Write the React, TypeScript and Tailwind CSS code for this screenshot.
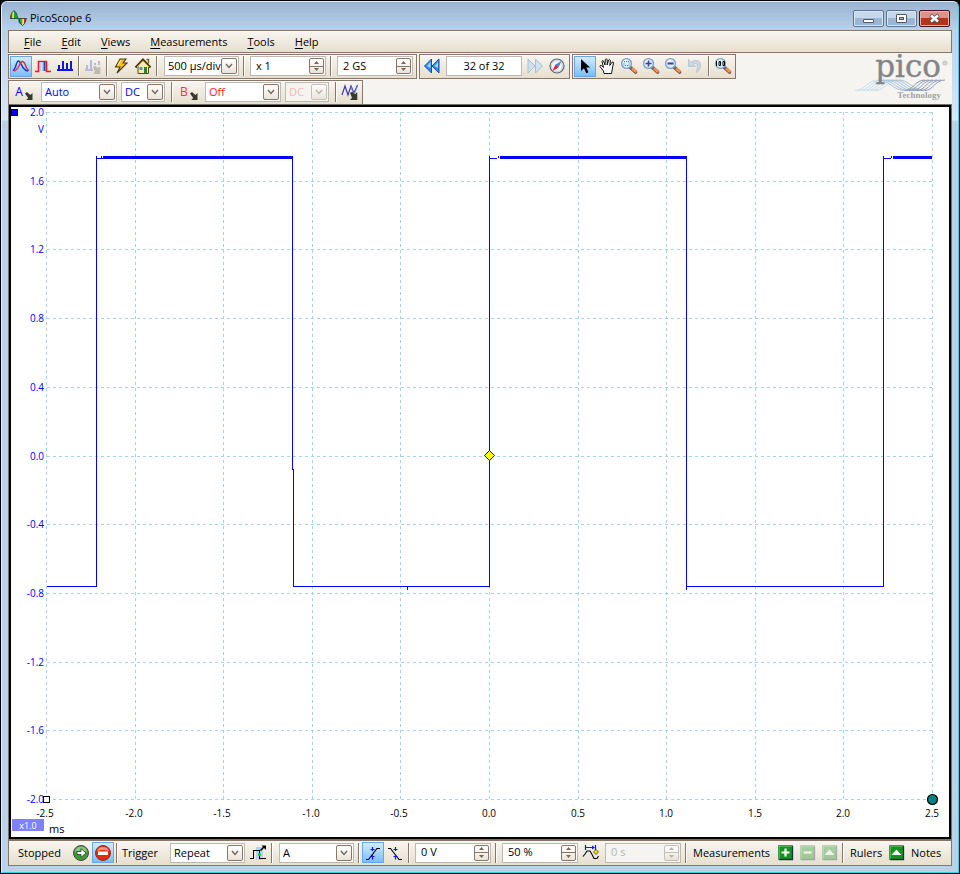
import React from "react";

const FONT = "font-['Open_Sans','Noto_Sans',sans-serif]";

/* ---------- generic controls ---------- */

function Sep() {
  return (
    <span className="flex h-5 w-1.5 shrink-0 pl-0.5" aria-hidden="true">
      <span className="w-px bg-[#8b7565]" />
      <span className="w-px bg-white" />
    </span>
  );
}

function Tool({
  label,
  pressed = false,
  disabled = false,
  children,
}: {
  label: string;
  pressed?: boolean;
  disabled?: boolean;
  children: React.ReactNode;
}) {
  return (
    <button
      type="button"
      aria-label={label}
      title={label}
      disabled={disabled}
      className={
        "flex h-[21px] w-[22px] shrink-0 items-center justify-center border " +
        (pressed
          ? "border-[#66a7e8] bg-linear-to-b from-[#d6ebfd] to-[#74bffb]"
          : "border-transparent")
      }
    >
      <svg width="18" height="18" viewBox="-1 -1 18 18" className="shrink-0">
        {children}
      </svg>
    </button>
  );
}

function Drop({
  label,
  value,
  width,
  tone = "text-black",
  disabled = false,
}: {
  label: string;
  value: string;
  width: string;
  tone?: string;
  disabled?: boolean;
}) {
  return (
    <div className={"relative h-5 shrink-0 " + width}>
      <select
        aria-label={label}
        defaultValue={value}
        disabled={disabled}
        className={
          "block h-5 w-full appearance-none border border-[#bdb9b3] pl-[3px] text-[11px] leading-4 " +
          (disabled ? "bg-[#f6f4f1] " : "bg-white ") +
          tone
        }
      >
        <option>{value}</option>
      </select>
      <span
        className={
          "pointer-events-none absolute top-0.5 right-0.5 flex h-4 w-4 items-center justify-center rounded-xs border bg-linear-to-b from-white to-[#e9e4da] " +
          (disabled ? "border-[#c5c0ba]" : "border-[#8b7565]")
        }
      >
        <svg width="8" height="6" viewBox="0 0 8 6" fill="none" stroke={disabled ? "#b7b2ac" : "#7a6658"} strokeWidth="1.4">
          <path d="M1 1l3 3.5L7 1" />
        </svg>
      </span>
    </div>
  );
}

function Spin({ label, value, disabled = false }: { label: string; value: string; disabled?: boolean }) {
  const edge = disabled ? "border-[#c5c0ba]" : "border-[#8b7565]";
  const ink = disabled ? "#b7b2ac" : "#7a6658";
  return (
    <div
      className={
        "flex h-5 w-[76px] shrink-0 items-center border border-[#bdb9b3] pr-px " +
        (disabled ? "bg-[#f6f4f1]" : "bg-white")
      }
    >
      <input
        aria-label={label}
        defaultValue={value}
        disabled={disabled}
        className={
          "h-full w-0 flex-1 bg-transparent pb-0.5 pl-[5px] text-[11px] outline-none " +
          (disabled ? "text-[#b5b5b5]" : "text-black")
        }
      />
      <div className={"flex h-4 w-[15px] flex-col overflow-hidden rounded-xs border bg-linear-to-b from-white to-[#e9e4da] " + edge}>
        <button type="button" disabled={disabled} aria-label={label + " up"} className={"flex flex-1 items-center justify-center border-b " + edge}>
          <svg width="5" height="3" viewBox="0 0 5 3">
            <path d="M0 3L2.5 0 5 3z" fill={ink} />
          </svg>
        </button>
        <button type="button" disabled={disabled} aria-label={label + " down"} className="flex flex-1 items-center justify-center">
          <svg width="5" height="3" viewBox="0 0 5 3">
            <path d="M0 0L2.5 3 5 0z" fill={ink} />
          </svg>
        </button>
      </div>
    </div>
  );
}

/* ---------- icons ---------- */

function Lens({ children }: { children?: React.ReactNode }) {
  return (
    <>
      <path d="M9.5 9.5l5 4.5" stroke="#7a4a3c" strokeWidth="3.6" strokeLinecap="round" />
      <path d="M10 9.5l4.5 4" stroke="#f79646" strokeWidth="2.4" strokeLinecap="round" />
      <path d="M9.4 9.4l1.5 1.3" stroke="#5a6690" strokeWidth="2.6" />
      <circle cx="5.5" cy="5.5" r="4.900" fill="#d3f1fb" stroke="#7c9cc4" strokeWidth="1.300" />
      <path d="M2.500 5a3.300 3.300 0 0 1 3-2.800" stroke="#fff" strokeWidth="1.400" fill="none" />
      {children}
    </>
  );
}

function SmallArrow({ fill = "#38382f" }: { fill?: string }) {
  return <path d="M8 9l2-1.200 3 2.400 2.300-2V16H8l2-2.200z" fill={fill} />;
}

function ChannelButton({ name, tone, width }: { name: string; tone: string; width: string }) {
  return (
    <button type="button" aria-label={"Channel " + name} className={"flex h-5 shrink-0 items-center pl-1 text-[12px] " + tone + " " + width}>
      <span className="w-2.5 leading-4">{name}</span>
      <svg width="10" height="10" viewBox="0 0 10 10" className="mt-2">
        <path d="M1 2.500L3 1l3.300 3L8.500 2v7H2.200l2-2z" fill="#38382f" />
      </svg>
    </button>
  );
}

function Logo() {
  const strands = [0, 1, 2, 3, 4, 5];
  return (
    <svg width="95" height="46" viewBox="0 0 95 46" className="shrink-0 overflow-visible" role="img" aria-label="pico Technology">
      <g fill="none" strokeWidth="0.900">
        {strands.map((i) => (
          <path key={"a" + i} d={`M${-2 + i * 4} 36.500c10 0 12 -10.500 24 -10.500`} stroke="#bfdcf0" />
        ))}
        {strands.map((i) => (
          <path key={"b" + i} d={`M${22 + i * 4} 26c10 0 14 10.500 26 10.500`} stroke="#9dbbd6" />
        ))}
        {strands.map((i) => (
          <path key={"c" + i} d={`M${48 + i * 4} 36.500c8 0 10 -10.500 20 -10.500`} stroke="#7f8bad" />
        ))}
      </g>
      <text x="84" y="23" textAnchor="end" fontSize="31" fill="#858585" stroke="#858585" strokeWidth="0.400" className="font-['DejaVu_Serif',serif]">
        pico
      </text>
      <circle cx="88" cy="9" r="2" fill="none" stroke="#a0a0a0" strokeWidth="0.700" />
      <path d="M87.400 10V8h1l.3.600-.600.500.600.900" fill="none" stroke="#a0a0a0" strokeWidth="0.400" />
      <text x="84" y="44" textAnchor="end" fontSize="9" fontWeight="700" fill="#a3a3a3" className="font-['Liberation_Serif',serif]">
        Technology
      </text>
    </svg>
  );
}

/* ---------- window furniture ---------- */

function TitleBar() {
  const plain =
    "border-[#5f7390] bg-linear-to-b from-[#c6d8ec] from-50% to-[#9bb6d4] to-50%";
  return (
    <header className="flex h-7 items-center pl-0.5 pr-0.5">
      <svg width="17" height="17" viewBox="0 0 17 17" className="mt-1">
        <path d="M0.500 8.500V6L2.500 2v6.500z" fill="#d9321e" />
        <path d="M2.300 8.500V2.500L4 1v7.500z" fill="#f5e63b" />
        <path d="M4 8.500V1l2 1.500 1.500 6z" fill="#16a02c" />
        <path d="M0 8.500Q4-7 8 8.500z" fill="none" stroke="#2b3a2b" strokeWidth="0.800" />
        <path d="M8.500 8.500H10V14L8.500 12z" fill="#1c5fd0" />
        <path d="M10 8.500h2.500V15L10 14z" fill="#2fae3a" />
        <path d="M12.300 8.500H14V14l-1.700 1.500z" fill="#f5e63b" />
        <path d="M14 8.500h2V11l-2 3z" fill="#d9321e" />
        <path d="M8.500 8.500q4 14 8 0z" fill="none" stroke="#2b3a2b" strokeWidth="0.800" />
      </svg>
      <h1 className="ml-[3px] flex-1 pt-1 text-[11px] leading-4">PicoScope 6</h1>
      <div className="mt-1 flex gap-0.5">
        <button type="button" aria-label="Minimize" className={"flex h-[17px] w-[31px] items-center justify-center rounded-xs border shadow-[inset_0_0_0_1px_#dbe7f4] " + plain}>
          <svg width="13" height="11" viewBox="0 0 13 11">
            <rect x="1.500" y="6.500" width="10" height="3" rx="0.500" fill="#fff" stroke="#535666" />
          </svg>
        </button>
        <button type="button" aria-label="Maximize" className={"flex h-[17px] w-[31px] items-center justify-center rounded-xs border shadow-[inset_0_0_0_1px_#dbe7f4] " + plain}>
          <svg width="13" height="11" viewBox="0 0 13 11">
            <rect x="1.500" y="1.500" width="10" height="8" rx="0.500" fill="#fff" stroke="#535666" />
            <rect x="4.500" y="4.500" width="4" height="2" fill="#9bb6d4" stroke="#535666" />
          </svg>
        </button>
        <button type="button" aria-label="Close" className="flex h-[17px] w-[31px] items-center justify-center rounded-xs border border-[#4a1226] bg-linear-to-b from-[#dd9486] from-45% to-[#b9301b] to-50% shadow-[inset_0_0_0_1px_#e9b2a8]">
          <svg width="13" height="11" viewBox="0 0 13 11">
            <path d="M2.500 2l8 7M10.500 2l-8 7" stroke="#535666" strokeWidth="4" />
            <path d="M3 2.500l7 6M10 2.500l-7 6" stroke="#fff" strokeWidth="2.400" />
          </svg>
        </button>
      </div>
    </header>
  );
}

function MenuBar() {
  const items = ["File", "Edit", "Views", "Measurements", "Tools", "Help"];
  return (
    <nav className="flex h-[23px] items-center gap-5 border border-[#8b7565] bg-linear-to-b from-[#f8f6f1] to-[#e7dfce] pl-[15px] shadow-[inset_0_1px_0_#fff]">
      {items.map((m) => (
        <button key={m} type="button" className="text-[11px] leading-4">
          <span className="underline underline-offset-2">{m[0]}</span>
          {m.slice(1)}
        </button>
      ))}
    </nav>
  );
}

const STRIP =
  "flex h-[25px] items-center border border-[#8b7565] bg-linear-to-b from-[#f8f6f1] to-[#e7dfce] px-px pb-px shadow-[inset_0_1px_0_#fff]";

function Toolbars() {
  return (
    <div className="flex items-start justify-between bg-[#f5f4f1] pt-px">
      <div className="flex flex-col gap-px">
        <div className="flex gap-0.5">
          <div className={STRIP}>
            <Tool label="Scope mode" pressed>
              <path d="M0 12.500C3 11.500 3 3 5.500 3S9 12.500 15 13" fill="none" stroke="#1f2be0" strokeWidth="1.400" />
              <path d="M1 13C6 12 6.500 3.500 9.500 3.500S13 12 16 12.500" fill="none" stroke="#e02a3a" strokeWidth="1.400" />
            </Tool>
            <Tool label="Persistence mode">
              <rect x="5" y="3" width="6" height="10" fill="#9cb9e8" />
              <path d="M0 13.500h3.500V3.500h8v10H16" fill="none" stroke="#f01822" strokeWidth="1.600" />
              <path d="M6.500 4v9" stroke="#cfe0f7" strokeWidth="2" />
              <path d="M9.500 4v9" stroke="#1c55b8" strokeWidth="1.600" />
            </Tool>
            <Tool label="Spectrum mode">
              <path d="M0 12h16M2 12V7M6 12V3M10 12V5M14 12V3" stroke="#1018e0" strokeWidth="2" fill="none" shapeRendering="crispEdges" />
            </Tool>
            <Sep />
            <Tool label="Spectrum options" disabled>
              <path d="M0 12h8M2 12V7M6 12V2M10 7V5M14 7V3" stroke="#b5b9dc" strokeWidth="2" fill="none" shapeRendering="crispEdges" />
              <SmallArrow fill="#bdbab4" />
            </Tool>
            <Sep />
            <Tool label="Auto setup">
              <path d="M7 1h6l-3 4h4L4 15l3-6H2.500z" fill="#f8c21c" stroke="#4d3a10" strokeWidth="1.100" />
              <path d="M7.500 2.500L5 7" stroke="#fff3b0" strokeWidth="1.200" />
            </Tool>
            <Tool label="Home">
              <path d="M3 8v7.500h10.500V8L8 3z" fill="#f8e9b8" stroke="#5c4a18" />
              <path d="M0.500 9.500L8 1.500l7.500 8" fill="none" stroke="#3e3412" strokeWidth="2" />
              <path d="M11.500 1.500h2v4" fill="none" stroke="#7b5a1c" strokeWidth="1.400" />
              <path d="M2 9L8 2.800 14 9" fill="none" stroke="#f1c22f" strokeWidth="1" />
              <rect x="9" y="9" width="3" height="6" fill="#2f7d32" />
              <rect x="4.500" y="9" width="3" height="3" fill="#5f8fd6" />
            </Tool>
            <Sep />
            <div className="ml-1 mr-0.5">
              <Drop label="Timebase" value="500 µs/div" width="w-[75px]" />
            </div>
            <Sep />
            <div className="ml-[3px] mr-0.5">
              <Spin label="Zoom factor" value="x 1" />
            </div>
            <Sep />
            <div className="ml-[3px] mr-0.5">
              <Spin label="Samples" value="2 GS" />
            </div>
          </div>

          <div className={STRIP}>
            <Tool label="First buffer">
              <path d="M7.500 1v14L0.500 8zM15 1v14L8 8z" fill="#2b8ef0" stroke="#1550a8" />
              <path d="M6.500 4v6L3 8zM14 4v6l-3.500-2z" fill="#9fd8ff" />
            </Tool>
            <input
              aria-label="Buffer"
              defaultValue="32 of 32"
              className="ml-[3px] mr-0.5 h-5 w-[76px] border border-[#bdb9b3] bg-white pb-0.5 text-center text-[11px] outline-none"
            />
            <Tool label="Next buffer" disabled>
              <path d="M1 1v14l7-7zM8.500 1v14l7-7z" fill="#cfe0ee" stroke="#a9bfd2" />
            </Tool>
            <Tool label="Buffer navigator">
              <circle cx="8" cy="8" r="7" fill="#f4f7fd" stroke="#5d6470" strokeWidth="1.200" />
              <circle cx="8" cy="8" r="5.500" fill="none" stroke="#c3c9d6" />
              <path d="M12.500 3L9.500 9.500 6.500 6.500z" fill="#4a80e0" />
              <path d="M3.500 13L6.500 6.500l3 3z" fill="#e01f28" />
            </Tool>
          </div>

          <div className={STRIP}>
            <Tool label="Normal selection" pressed>
              <path d="M4 1v12l3-2.700 2.300 5 2.200-1-2.200-4.800H13z" fill="#000" />
            </Tool>
            <Tool label="Hand">
              <path
                d="M5 15.500L4.500 13 1 8.500Q.8 7 2.500 7.500L4.500 9.500 3 3.500Q3.300 2 4.500 3L6 7 6.300 1.500Q7.200.2 8.200 1.500V7L9.600 2Q10.800 1 11.400 2.300L10.800 7.500 13 4.200Q14.500 3.600 14.500 5L13.300 11 12.500 15.500z"
                fill="#fff"
                stroke="#111"
              />
            </Tool>
            <Tool label="Marquee zoom">
              <Lens>
                <rect x="3" y="3.500" width="5" height="4" fill="none" stroke="#5b6fae" strokeDasharray="1 1" />
              </Lens>
            </Tool>
            <Tool label="Zoom in">
              <Lens>
                <path d="M2.500 5.500h6M5.500 2.500v6" stroke="#4b3a9c" strokeWidth="1.600" />
              </Lens>
            </Tool>
            <Tool label="Zoom out">
              <Lens>
                <path d="M2.500 5.500h6" stroke="#4b3a9c" strokeWidth="2" />
              </Lens>
            </Tool>
            <Tool label="Undo zoom" disabled>
              <path d="M1.500 1.500v7h7L6.200 6.200C9 4 12.500 6.500 9 14.500 15 11.500 15.500 2.500 9 2.500 6.500 2.500 5 3.500 4 4.300z" fill="#cdd7e4" stroke="#b0bfd2" strokeWidth="0.800" />
            </Tool>
            <Sep />
            <Tool label="Zoom to 100%">
              <Lens>
                <path d="M1.500 3v5M4 3.500h1.500v4H4zM8 3.500h1.500v4H8z" stroke="#000" strokeWidth="1" fill="none" />
              </Lens>
            </Tool>
          </div>
        </div>

        <div className="flex">
          <div className="flex h-6 items-center border border-b-0 border-[#8b7565] bg-linear-to-b from-[#f8f6f1] to-[#e7dfce] px-px pb-px shadow-[inset_0_1px_0_#fff]">
            <ChannelButton name="A" tone="text-[#0000ff]" width="w-[31px]" />
            <Drop label="Channel A range" value="Auto" width="w-[76px]" tone="text-[#0000ff]" />
            <div className="mx-1">
              <Drop label="Channel A coupling" value="DC" width="w-[44px]" tone="text-[#0000ff]" />
            </div>
            <Sep />
            <ChannelButton name="B" tone="text-[#ff3040]" width="w-[30px]" />
            <Drop label="Channel B range" value="Off" width="w-[76px]" tone="text-[#ff1a2a]" />
            <div className="mx-1">
              <Drop label="Channel B coupling" value="DC" width="w-[44px]" tone="text-[#ffb4b8]" disabled />
            </div>
            <Sep />
            <Tool label="Digital channels">
              <path d="M0 11L3 2l3 9 3-9 3 7 3.500-8" fill="none" stroke="#3a3ab4" strokeWidth="1.200" />
              <path d="M9 3l3 8 3-8" fill="none" stroke="#7a8ac8" strokeWidth="1" />
              <SmallArrow />
            </Tool>
          </div>
        </div>
      </div>
      <Logo />
    </div>
  );
}

/* ---------- graph ---------- */

const GRID_X = [35, 124, 212, 301, 389, 478, 567, 655, 744, 832, 921];
const GRID_Y = [5, 74, 142, 211, 280, 349, 417, 486, 555, 623, 692];
const TIMES = ["-2.5", "-2.0", "-1.5", "-1.0", "-0.5", "0.0", "0.5", "1.0", "1.5", "2.0", "2.5"];
const VOLTS = ["2.0", "1.6", "1.2", "0.8", "0.4", "0.0", "-0.4", "-0.8", "-1.2", "-1.6", "-2.0"];

function Graph() {
  return (
    <main className="border border-[#77726c]">
      <div className="border-2 border-black bg-white">
        <svg viewBox="0 0 938 730" className="block w-full overflow-visible text-[10px]">
          <g stroke="#a6d4e2" strokeDasharray="3 3" shapeRendering="crispEdges">
            {GRID_X.map((x) => (
              <line key={x} x1={x + 0.5} x2={x + 0.5} y1="5" y2="692" />
            ))}
            {GRID_Y.map((y) => (
              <line key={y} x1="36" x2="921" y1={y + 0.5} y2={y + 0.5} />
            ))}
          </g>

          <g fill="none" stroke="#0000ff" shapeRendering="crispEdges">
            <path d="M36 479.500H85.500V49M85 51.500H92M281.500 49V362.500h1V479.500H478.500V49M478 51.500h8M675.500 49V483M675 479.500H872.500V49M872 51.500h8M396.500 479v4M90.500 49v2M487.500 49v2M880.500 49v2" />
            <path d="M92 50.500H282M489 50.500H676M882 50.500h39" strokeWidth="3" />
          </g>

          <g fill="#0000ff" textAnchor="end">
            {VOLTS.map((v, i) => (
              <text key={v} x="33" y={GRID_Y[i] + 4}>
                {v}
              </text>
            ))}
            <text x="33" y="26">V</text>
          </g>
          <g fill="#000" textAnchor="middle">
            {TIMES.map((t, i) => (
              <text key={t} x={GRID_X[i] - (t[0] === "-" ? 1 : 0)} y="710">
                {t}
              </text>
            ))}
          </g>

          <rect x="0.500" y="2.500" width="6" height="6" fill="#0000ff" stroke="#000" shapeRendering="crispEdges" />
          <rect x="32.500" y="689.500" width="6" height="6" fill="#fff" stroke="#000" shapeRendering="crispEdges" />
          <circle cx="921.500" cy="692.500" r="5" fill="#008080" stroke="#000" strokeWidth="1.200" />
          <path d="M478.500 343.500l5 5-5 5-5-5z" fill="#ffff00" stroke="#1a1a50" />

          <rect x="1" y="712" width="32" height="12" fill="#8080ff" />
          <text x="17" y="722" textAnchor="middle" fill="#fff" fontSize="9">
            x1.0
          </text>
          <text x="38" y="726" fontSize="11">
            ms
          </text>
        </svg>
      </div>
    </main>
  );
}

/* ---------- bottom bar ---------- */

function GreenTile({ children, faded = false }: { children: React.ReactNode; faded?: boolean }) {
  return (
    <g opacity={faded ? 0.35 : 1}>
      <rect x="1.500" y="0.500" width="14" height="14" rx="0.500" fill="#14941a" stroke="#0c5c2c" />
      <path d="M2 14V1h13" fill="none" stroke="#7fd07f" />
      <path d="M2.500 14.500h13v-13" fill="none" stroke="#17324f" strokeWidth="1.300" />
      {children}
    </g>
  );
}

function StatusBar() {
  return (
    <footer className="flex h-[26px] items-center border border-[#8b7565] bg-linear-to-b from-[#f8f6f1] to-[#e7dfce] pl-px pb-px text-[11px] leading-4">
      <span className="w-[60px] shrink-0 pl-2">Stopped</span>
      <Tool label="Start">
        <circle cx="8" cy="8" r="7.500" fill="#3f9a34" stroke="#4a4a4a" strokeWidth="1" />
        <path d="M2 7a6 5.500 0 0 1 12 0q-6-2.500-12 0z" fill="#a9dc9c" fillOpacity="0.700" />
        <path d="M4 6.500h4V3.500L13 8l-5 4.500v-3H4z" fill="#fff" stroke="#2d4d2a" strokeWidth="0.900" />
      </Tool>
      <Tool label="Stop" pressed>
        <circle cx="8" cy="8" r="7.500" fill="#e02a12" stroke="#9a3020" strokeWidth="1" />
        <path d="M2 6a6.200 5.500 0 0 1 12 0q-6-2-12 0z" fill="#ffb09c" fillOpacity="0.800" />
        <rect x="3" y="6.500" width="10" height="3.500" fill="#fff" />
      </Tool>
      <Sep />
      <span className="w-[50px] shrink-0 pl-0.5">Trigger</span>
      <Drop label="Trigger mode" value="Repeat" width="w-[75px]" />
      <div className="ml-0.5">
        <Tool label="Advanced triggers">
          <rect x="6" y="2" width="7" height="13" fill="#b4d4f2" />
          <path d="M0 13.500h3.500V5.500h6v8H16" fill="none" stroke="#000" shapeRendering="crispEdges" />
          <path d="M10.500 5.500L14 2" stroke="#000" strokeWidth="1.600" />
          <path d="M11.500 0.500H16V5z" fill="#000" />
          <circle cx="9.500" cy="9.500" r="1.600" fill="#10c820" />
        </Tool>
      </div>
      <Sep />
      <div className="ml-1 mr-0.5">
        <Drop label="Trigger source" value="A" width="w-[75px]" />
      </div>
      <Sep />
      <Tool label="Rising edge" pressed>
        <path d="M1 14.500h2.500L12 3.500h3" fill="none" stroke="#000" strokeWidth="1.100" />
        <path d="M7.500 2v4M7.500 10v4.500M5.500 4.500h4M5.500 11.500h4" stroke="#1010ff" strokeWidth="1.200" />
      </Tool>
      <Tool label="Falling edge">
        <path d="M1 3.500h2.500L12 14.500h3" fill="none" stroke="#000" strokeWidth="1.100" />
        <path d="M8.500 2v4M8.500 10v4.500M6.500 4.500h4M6.500 11.500h4" stroke="#1010ff" strokeWidth="1.200" />
      </Tool>
      <Sep />
      <div className="ml-[3px] mr-0.5">
        <Spin label="Threshold" value="0 V" />
      </div>
      <Sep />
      <div className="ml-[3px] mr-0.5">
        <Spin label="Pre-trigger" value="50 %" />
      </div>
      <Tool label="Post-trigger delay">
        <path d="M0 11.500L2 9l2-3h3l2 3.500 2 4h3L15.500 11" fill="none" stroke="#000" strokeWidth="1.100" />
        <path d="M2.500 0v5M2 2.500h8M12.500 0v5" stroke="#1018ff" strokeWidth="1.200" fill="none" />
        <path d="M9 0.500l3 2-3 2z" fill="#1018ff" />
        <path d="M13 4.500l2.500 2.500-2.500 2.500-2.500-2.500z" fill="#ffe000" stroke="#333" strokeWidth="0.800" />
      </Tool>
      <div className="ml-[3px] mr-0.5">
        <Spin label="Delay" value="0 s" disabled />
      </div>
      <Sep />
      <span className="w-[85px] shrink-0 pl-1">Measurements</span>
      <Tool label="Add measurement">
        <GreenTile>
          <path d="M4.500 7.500h8M8.500 3.500v8" stroke="#fff" strokeWidth="2.200" />
        </GreenTile>
      </Tool>
      <Tool label="Remove measurement" disabled>
        <GreenTile faded>
          <path d="M4.500 7.500h8" stroke="#fff" strokeWidth="2.200" />
        </GreenTile>
      </Tool>
      <Tool label="Edit measurement" disabled>
        <GreenTile faded>
          <path d="M3.500 10h10L8.500 4.500z" fill="#fff" />
        </GreenTile>
      </Tool>
      <Sep />
      <span className="w-[39px] shrink-0 pl-1">Rulers</span>
      <Tool label="Ruler legend">
        <GreenTile>
          <path d="M3.500 10h10L8.500 4.500z" fill="#fff" />
        </GreenTile>
      </Tool>
      <span className="pl-1">Notes</span>
    </footer>
  );
}

export default function App() {
  return (
    <div className={"w-full border border-black bg-[#101418] text-black " + FONT}>
      <div className="rounded-t-md border border-t-[#dfe9f5] border-r-[#35d3e8] border-b-[#35d3e8] border-l-[#e4eef9] bg-[linear-gradient(to_bottom,#98b3d2_0px,#b9d1ea_28px,#d9e7f6_118px,#b9d1ea_119px)] px-1.5 pb-1.5">
        <TitleBar />
        <MenuBar />
        <Toolbars />
        <Graph />
        <StatusBar />
      </div>
    </div>
  );
}
